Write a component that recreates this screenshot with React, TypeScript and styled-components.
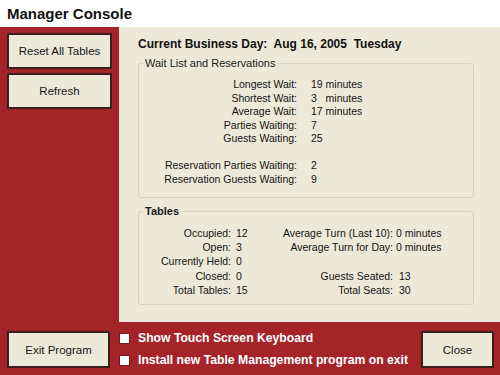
import React from "react";
import styled, { createGlobalStyle } from "styled-components";

const GlobalStyle = createGlobalStyle`
    body {
        margin: 0;
        font-family: "Liberation Sans", Arial, sans-serif;
        color: #1c1c1c;
    }
`;

const waitRows = [
    { label: "Longest Wait:", value: "19 minutes" },
    { label: "Shortest Wait:", value: "3\u00a0\u00a0 minutes" },
    { label: "Average Wait:", value: "17 minutes" },
    { label: "Parties Waiting:", value: "7" },
    { label: "Guests Waiting:", value: "25" },
    null,
    { label: "Reservation Parties Waiting:", value: "2" },
    { label: "Reservation Guests Waiting:", value: "9" },
];

const tableRows = [
    ["Occupied:", "12", "Average Turn (Last 10):", "0 minutes"],
    ["Open:", "3", "Average Turn for Day:", "0 minutes"],
    ["Currently Held:", "0", "", ""],
    ["Closed:", "0", "Guests Seated:", "13"],
    ["Total Tables:", "15", "Total Seats:", "30"],
];

export default function App() {
    return (
        <Screen>
            <GlobalStyle />
            <TitleBar>Manager Console</TitleBar>
            <Main>
                <Sidebar>
                    <ConsoleButton>Reset All Tables</ConsoleButton>
                    <ConsoleButton>Refresh</ConsoleButton>
                </Sidebar>
                <Content>
                    <Heading>Current Business Day:&nbsp; Aug 16, 2005&nbsp; Tuesday</Heading>
                    <Group $bottom={11}>
                        <Legend>Wait List and Reservations</Legend>
                        <WaitGrid>
                            {waitRows.map((row, i) =>
                                row ? (
                                    <React.Fragment key={i}>
                                        <Label>{row.label}</Label>
                                        <Value>{row.value}</Value>
                                    </React.Fragment>
                                ) : (
                                    <Spacer key={i} />
                                )
                            )}
                        </WaitGrid>
                    </Group>
                    <Group $top={7} $bottom={7}>
                        <Legend $bold>Tables</Legend>
                        <TablesGrid>
                            {tableRows.map((row, i) => (
                                <React.Fragment key={i}>
                                    <Label>{row[0]}</Label>
                                    <Value>{row[1]}</Value>
                                    <Label>{row[2]}</Label>
                                    <Value $shift={row[3].length < 3}>{row[3]}</Value>
                                </React.Fragment>
                            ))}
                        </TablesGrid>
                    </Group>
                </Content>
            </Main>
            <BottomBar>
                <ConsoleButton $width={103}>Exit Program</ConsoleButton>
                <Options>
                    <Option>
                        <Check type="checkbox" />
                        Show Touch Screen Keyboard
                    </Option>
                    <Option>
                        <Check type="checkbox" />
                        Install new Table Management program on exit
                    </Option>
                </Options>
                <ConsoleButton $width={73}>Close</ConsoleButton>
            </BottomBar>
        </Screen>
    );
}

const Screen = styled.div`
    width: 500px;
    height: 375px;
    display: flex;
    flex-direction: column;
    background: #a4242a;
    overflow: hidden;
`;

const TitleBar = styled.div`
    height: 27px;
    flex-shrink: 0;
    background: #ffffff;
    display: flex;
    align-items: center;
    padding-left: 7px;
    font-size: 15px;
    font-weight: bold;
    color: #111;
`;

const Main = styled.div`
    height: 295px;
    display: flex;
    flex-direction: row;
`;

const Sidebar = styled.div`
    width: 119px;
    flex-shrink: 0;
    box-sizing: border-box;
    padding: 6px 7px;
    display: flex;
    flex-direction: column;
    gap: 4px;
`;

const ConsoleButton = styled.button<{ $width?: number }>`
    width: ${(p) => (p.$width ? `${p.$width}px` : "105px")};
    height: 36px;
    flex-shrink: 0;
    box-sizing: border-box;
    background: #ece9d8;
    border: 2px solid #3a1f1f;
    font-family: "Liberation Sans", Arial, sans-serif;
    font-size: 11.5px;
    color: #161616;
    padding: 0;
    cursor: pointer;
`;

const Content = styled.div`
    flex: 1;
    background: #ece9d8;
    box-sizing: border-box;
    padding: 10px 26px 0 19px;
`;

const Heading = styled.div`
    font-size: 12px;
    font-weight: bold;
    line-height: 14px;
    color: #111;
    margin-bottom: 6px;
`;

const Group = styled.fieldset<{ $top?: number; $bottom?: number }>`
    margin: ${(p) => p.$top ?? 0}px 0 0 0;
    padding: 8px 0 ${(p) => p.$bottom ?? 11}px 0;
    border: 1px solid #d3d0bf;
    border-radius: 3px;
    min-width: 0;
`;

const Legend = styled.legend<{ $bold?: boolean }>`
    margin-left: 4px;
    padding: 0 2px;
    font-size: 11px;
    line-height: 13px;
    font-weight: ${(p) => (p.$bold ? "bold" : "normal")};
    color: #1a1a1a;
`;

const WaitGrid = styled.div`
    display: grid;
    grid-template-columns: 158px auto;
    column-gap: 14px;
    grid-auto-rows: 13.5px;
    font-size: 10.5px;
    line-height: 13.5px;
`;

const TablesGrid = styled.div`
    display: grid;
    grid-template-columns: 92px 36px 116px auto;
    column-gap: 5px;
    grid-auto-rows: 14.2px;
    font-size: 10.5px;
    line-height: 14.2px;
    & > :nth-child(4n) {
        margin-left: -2px;
    }
`;

const Label = styled.div`
    text-align: right;
    white-space: nowrap;
    color: #141414;
`;

const Value = styled.div<{ $shift?: boolean }>`
    white-space: nowrap;
    color: #141414;
    padding-left: ${(p) => (p.$shift ? "3px" : "0")};
`;

const Spacer = styled.div`
    grid-column: 1 / -1;
    height: 13px;
`;

const BottomBar = styled.div`
    flex: 1;
    display: flex;
    flex-direction: row;
    align-items: flex-start;
    padding: 9px 6px 0 7px;
    gap: 9px;
    & > button {
        height: 37px;
    }
`;

const Options = styled.div`
    flex: 1;
    display: flex;
    flex-direction: column;
    gap: 8px;
`;

const Option = styled.label`
    display: flex;
    align-items: center;
    gap: 8px;
    font-size: 12.2px;
    font-weight: bold;
    line-height: 14px;
    color: #ffffff;
    white-space: nowrap;
`;

const Check = styled.input`
    appearance: none;
    margin: 0;
    width: 11px;
    height: 11px;
    flex-shrink: 0;
    background: #ffffff;
    border: 1px solid #7c1a1e;
    box-sizing: border-box;
`;
